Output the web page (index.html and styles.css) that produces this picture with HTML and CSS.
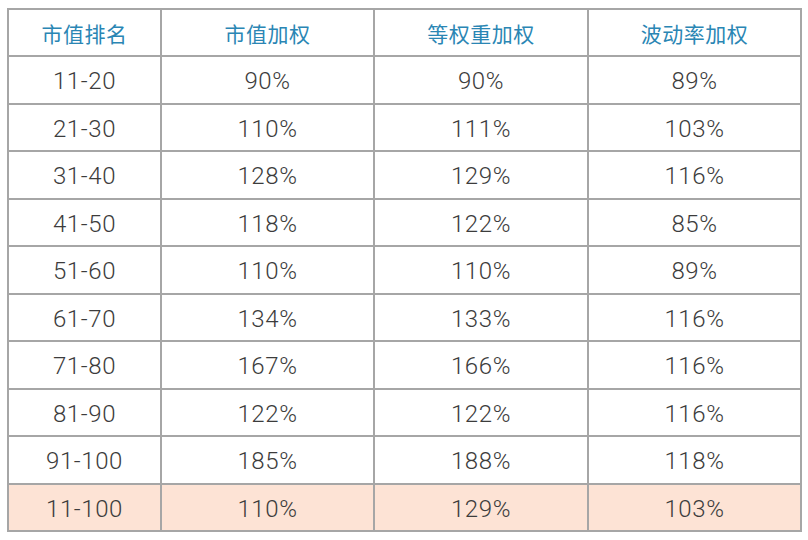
FILE: index.html
```html
<!DOCTYPE html>
<html lang="zh">
<head>
<meta charset="utf-8">
<link rel="stylesheet" href="styles.css">
</head>
<body>
<div class="table">
  <div class="cell head">市值排名</div>
  <div class="cell head">市值加权</div>
  <div class="cell head">等权重加权</div>
  <div class="cell head">波动率加权</div>

  <div class="cell">11-20</div><div class="cell">90%</div><div class="cell">90%</div><div class="cell">89%</div>
  <div class="cell">21-30</div><div class="cell">110%</div><div class="cell">111%</div><div class="cell">103%</div>
  <div class="cell">31-40</div><div class="cell">128%</div><div class="cell">129%</div><div class="cell">116%</div>
  <div class="cell">41-50</div><div class="cell">118%</div><div class="cell">122%</div><div class="cell">85%</div>
  <div class="cell">51-60</div><div class="cell">110%</div><div class="cell">110%</div><div class="cell">89%</div>
  <div class="cell">61-70</div><div class="cell">134%</div><div class="cell">133%</div><div class="cell">116%</div>
  <div class="cell">71-80</div><div class="cell">167%</div><div class="cell">166%</div><div class="cell">116%</div>
  <div class="cell">81-90</div><div class="cell">122%</div><div class="cell">122%</div><div class="cell">116%</div>
  <div class="cell">91-100</div><div class="cell">185%</div><div class="cell">188%</div><div class="cell">118%</div>
  <div class="cell total">11-100</div><div class="cell total">110%</div><div class="cell total">129%</div><div class="cell total">103%</div>
</div>
</body>
</html>
```

FILE: styles.css
```css
html, body {
  margin: 0;
  padding: 0;
  background: #ffffff;
}
body {
  padding: 8px 0 0 7px;
  font-family: "Roboto", "Liberation Sans", "Noto Sans CJK SC", sans-serif;
}
.table {
  display: grid;
  grid-template-columns: 153px 213px 214px 213px;
  grid-template-rows: 47px repeat(10, 47.5px);
  width: 795px;
  box-sizing: border-box;
  border-top: 2px solid #a6a6a6;
  border-left: 2px solid #a6a6a6;
}
.cell {
  box-sizing: border-box;
  border-right: 2px solid #a6a6a6;
  border-bottom: 2px solid #a6a6a6;
  display: flex;
  align-items: center;
  justify-content: center;
  padding-top: 3px;
  font-size: 24px;
  font-weight: 300;
  color: #3c3c3c;
  letter-spacing: 0.6px;
}
.head {
  font-family: "Noto Sans CJK SC", sans-serif;
  font-size: 21px;
  font-weight: 400;
  padding-top: 1px;
  color: #2a86b4;
  letter-spacing: 0.5px;
}
.total {
  background: #fde3d5;
}
```
